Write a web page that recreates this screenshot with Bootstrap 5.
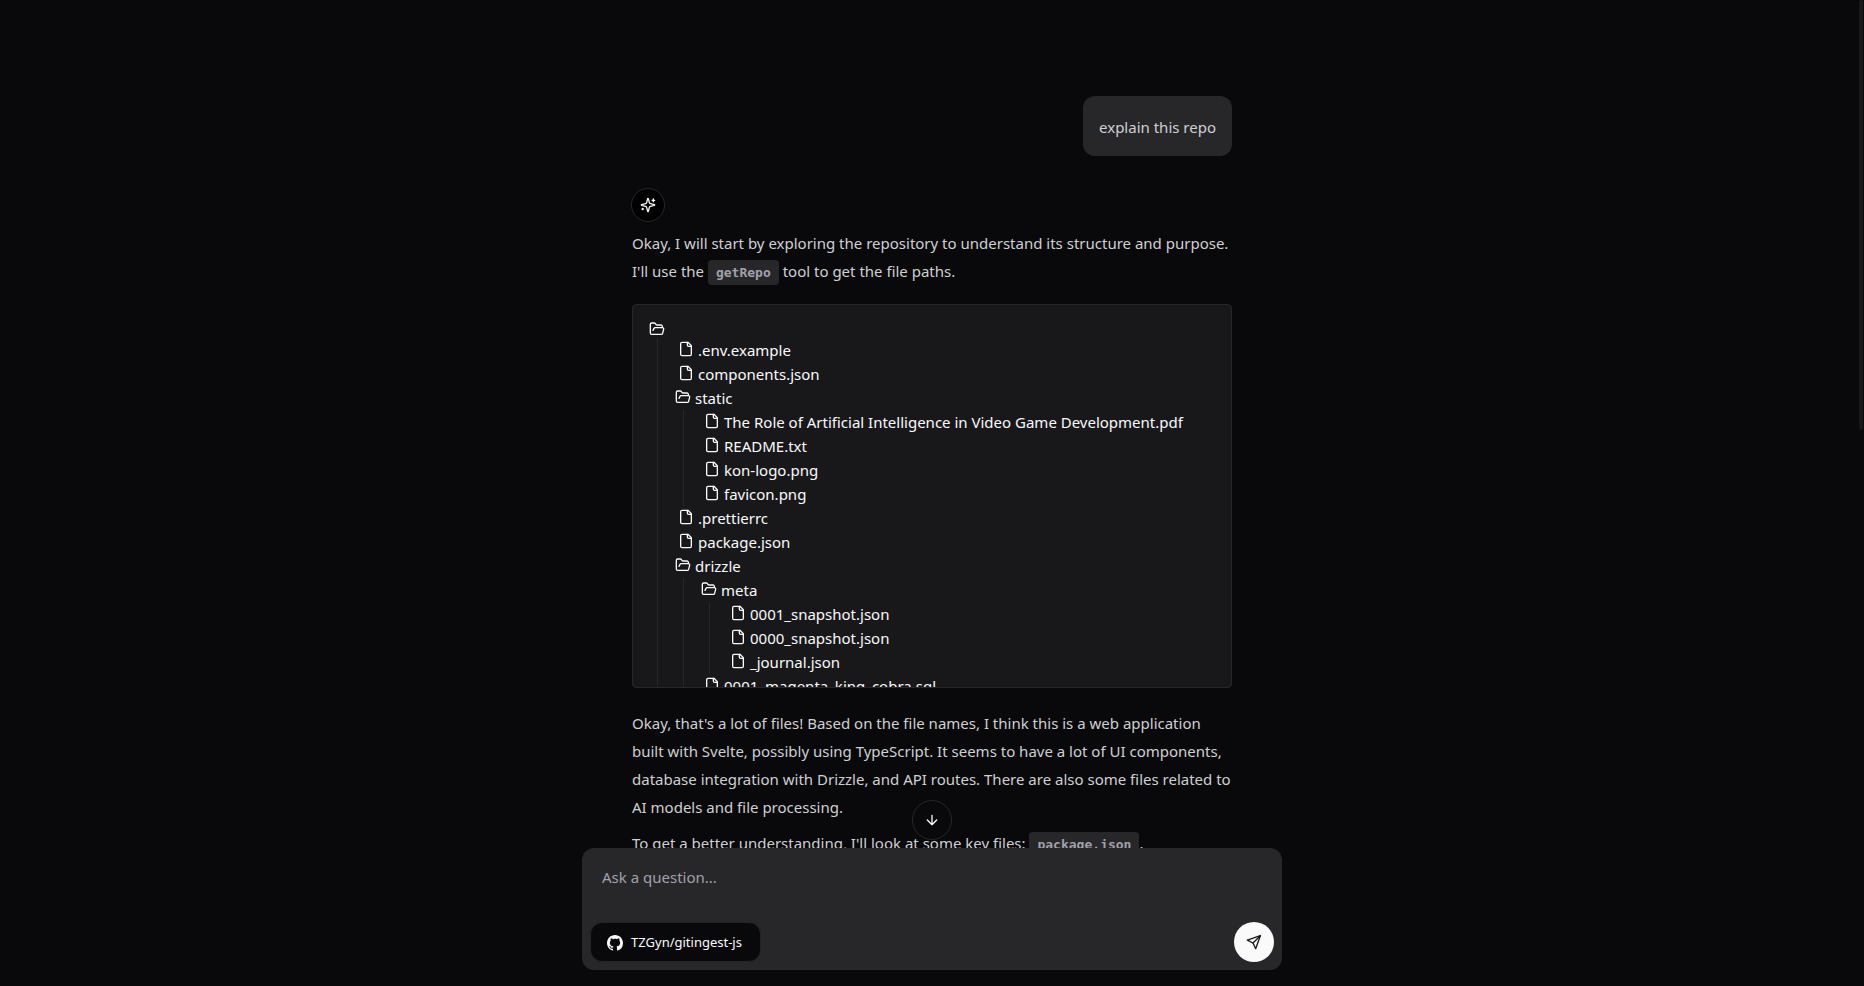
<!DOCTYPE html>
<html lang="en" data-bs-theme="dark">
<head>
<meta charset="utf-8">
<meta name="viewport" content="width=device-width, initial-scale=1">
<title>TZGyn/gitingest-js</title>
<link href="https://cdn.jsdelivr.net/npm/bootstrap@5.3.0/dist/css/bootstrap.min.css" rel="stylesheet">
<style>
  body { background: #09090b; color: #fafafa; font: 15px/24px "Noto Sans", "Open Sans", sans-serif; }
  svg { flex: none; fill: none; stroke: currentColor; stroke-width: 2; stroke-linecap: round; stroke-linejoin: round; }
  .scroll-area { min-height: 0; }
  .thread { max-width: 600px; padding-top: 96px; }
  .prose { line-height: 28px; color: #d0d0d2; }
  .bubble { background: #27272a; border-radius: 12px; padding: 17px 16px 15px; }
  .avatar { width: 34px; height: 34px; margin: 32px 0 7px -1px; background: #000; border: 1px solid #27272a; }
  .prose code { font: bold 13px/17px "DejaVu Sans Mono", monospace; color: #a1a1aa; background: #27272a; border-radius: 4px; padding: 5px 8px; }
  .tree-box { height: 384px; margin: 19px 0 21px; padding: 16px; background: #18181b; border: 1px solid #27272a; border-radius: 4px; }
  .tree-root { height: 17px; }
  .tree-box ul { margin-left: 8px; padding-left: 17px; border-left: 1px solid #27272a; }
  .tree-box ul svg { margin-bottom: 2px; }
  .tree-file { padding-left: 3px; }
  .composer-wrap { max-width: 700px; }
  .composer { background: #27272a; border-radius: 12px; }
  .composer textarea { height: 66px; padding: 9px 12px 7px; resize: none; font-size: 15px; line-height: 24px; }
  .composer textarea::placeholder { color: #a1a1aa; }
  .repo-btn { height: 40px; padding: 2px 18px 0 16px; background: #09090b; border: 1px solid #242427; border-radius: 12px; color: #fafafa; font-size: 13px; }
  .repo-btn svg { fill: currentColor; stroke: none; }
  .round-btn { width: 40px; height: 40px; }
  .send-btn { background: #fafafa; color: #18181b; }
  .down-btn { background: #09090b; border: 1px solid #27272a; color: #fafafa; bottom: 100%; }
  .scroll-thumb { width: 4px; height: 430px; right: 1px; background: #18181b; }
</style>
</head>
<body>
<svg class="d-none">
  <symbol id="file" viewBox="0 0 24 24"><path d="M15 2H6a2 2 0 0 0-2 2v16a2 2 0 0 0 2 2h12a2 2 0 0 0 2-2V7Z"/><path d="M14 2v4a2 2 0 0 0 2 2h4"/></symbol>
  <symbol id="folder" viewBox="0 0 24 24"><path d="m6 14 1.500-2.900A2 2 0 0 1 9.240 10H20a2 2 0 0 1 1.940 2.500l-1.540 6a2 2 0 0 1-1.950 1.500H4a2 2 0 0 1-2-2V5a2 2 0 0 1 2-2h3.900a2 2 0 0 1 1.690.900l.810 1.200a2 2 0 0 0 1.670.900H18a2 2 0 0 1 2 2v2"/></symbol>
</svg>
<div class="vh-100 d-flex flex-column position-relative overflow-hidden">
  <main class="scroll-area flex-fill overflow-hidden">
    <div class="thread mx-auto">
      <div class="d-flex justify-content-end prose"><div class="bubble">explain this repo</div></div>
      <div class="avatar rounded-circle d-flex align-items-center justify-content-center">
        <svg width="16" height="16" viewBox="0 0 24 24"><path d="M9.937 15.500A2 2 0 0 0 8.500 14.063l-6.135-1.582a.5.5 0 0 1 0-.962L8.500 9.936A2 2 0 0 0 9.937 8.500l1.582-6.135a.5.5 0 0 1 .963 0L14.063 8.500A2 2 0 0 0 15.500 9.937l6.135 1.581a.5.5 0 0 1 0 .964L15.500 14.063a2 2 0 0 0-1.437 1.437l-1.582 6.135a.5.5 0 0 1-.963 0z"/><path d="M20 3v4M22 5h-4M4 17v2M5 18H3"/></svg>
      </div>
      <p class="prose mb-0">Okay, I will start by exploring the repository to understand its structure and purpose. I'll use the <code>getRepo</code> tool to get the file paths.</p>
      <div class="tree-box overflow-hidden text-nowrap">
        <div class="tree-root d-flex align-items-start"><svg width="16" height="16"><use href="#folder"/></svg></div>
        <ul class="list-unstyled mb-0">
          <li class="tree-file d-flex align-items-center gap-1"><svg width="16" height="16"><use href="#file"/></svg>.env.example</li>
          <li class="tree-file d-flex align-items-center gap-1"><svg width="16" height="16"><use href="#file"/></svg>components.json</li>
          <li>
            <div class="d-flex align-items-center gap-1"><svg width="16" height="16"><use href="#folder"/></svg>static</div>
            <ul class="list-unstyled mb-0">
              <li class="tree-file d-flex align-items-center gap-1"><svg width="16" height="16"><use href="#file"/></svg>The Role of Artificial Intelligence in Video Game Development.pdf</li>
              <li class="tree-file d-flex align-items-center gap-1"><svg width="16" height="16"><use href="#file"/></svg>README.txt</li>
              <li class="tree-file d-flex align-items-center gap-1"><svg width="16" height="16"><use href="#file"/></svg>kon-logo.png</li>
              <li class="tree-file d-flex align-items-center gap-1"><svg width="16" height="16"><use href="#file"/></svg>favicon.png</li>
            </ul>
          </li>
          <li class="tree-file d-flex align-items-center gap-1"><svg width="16" height="16"><use href="#file"/></svg>.prettierrc</li>
          <li class="tree-file d-flex align-items-center gap-1"><svg width="16" height="16"><use href="#file"/></svg>package.json</li>
          <li>
            <div class="d-flex align-items-center gap-1"><svg width="16" height="16"><use href="#folder"/></svg>drizzle</div>
            <ul class="list-unstyled mb-0">
              <li>
                <div class="d-flex align-items-center gap-1"><svg width="16" height="16"><use href="#folder"/></svg>meta</div>
                <ul class="list-unstyled mb-0">
                  <li class="tree-file d-flex align-items-center gap-1"><svg width="16" height="16"><use href="#file"/></svg>0001_snapshot.json</li>
                  <li class="tree-file d-flex align-items-center gap-1"><svg width="16" height="16"><use href="#file"/></svg>0000_snapshot.json</li>
                  <li class="tree-file d-flex align-items-center gap-1"><svg width="16" height="16"><use href="#file"/></svg>_journal.json</li>
                </ul>
              </li>
              <li class="tree-file d-flex align-items-center gap-1"><svg width="16" height="16"><use href="#file"/></svg>0001_magenta_king_cobra.sql</li>
            </ul>
          </li>
        </ul>
      </div>
      <p class="prose mb-2">Okay, that's a lot of files! Based on the file names, I think this is a web application built with Svelte, possibly using TypeScript. It seems to have a lot of UI components, database integration with Drizzle, and API routes. There are also some files related to AI models and file processing.</p>
      <p class="prose mb-0">To get a better understanding, I'll look at some key files: <code>package.json</code>.</p>
    </div>
  </main>
  <footer class="composer-wrap w-100 mx-auto pb-3 position-relative">
    <button type="button" class="btn round-btn down-btn rounded-circle p-0 mb-2 position-absolute start-50 translate-middle-x d-flex align-items-center justify-content-center" aria-label="Scroll to bottom">
      <svg width="16" height="16" viewBox="0 0 24 24"><path d="M12 5v14M19 12l-7 7-7-7"/></svg>
    </button>
    <form class="composer p-2">
      <textarea class="form-control bg-transparent border-0 shadow-none d-block" placeholder="Ask a question..." aria-label="Ask a question"></textarea>
      <div class="d-flex justify-content-between align-items-center">
        <button type="button" class="btn repo-btn d-flex align-items-center gap-2">
          <svg width="16" height="16" viewBox="0 0 16 16"><path d="M8 0C3.580 0 0 3.580 0 8c0 3.540 2.290 6.530 5.470 7.590.4.070.55-.17.55-.38 0-.19-.01-.82-.01-1.490-2.010.37-2.530-.49-2.690-.94-.09-.23-.48-.94-.82-1.130-.28-.15-.68-.52-.01-.53.63-.01 1.080.58 1.230.82.72 1.210 1.870.87 2.330.66.07-.52.28-.87.51-1.070-1.780-.2-3.640-.89-3.640-3.950 0-.87.31-1.590.82-2.150-.08-.2-.36-1.020.08-2.120 0 0 .67-.21 2.200.82.64-.18 1.320-.27 2-.27s1.360.09 2 .27c1.530-1.040 2.200-.82 2.200-.82.44 1.100.16 1.920.08 2.120.51.56.82 1.270.82 2.150 0 3.070-1.870 3.750-3.650 3.950.29.25.54.73.54 1.480 0 1.070-.01 1.930-.01 2.200 0 .21.15.46.55.38A8.010 8.010 0 0 0 16 8c0-4.420-3.580-8-8-8"/></svg>
          TZGyn/gitingest-js
        </button>
        <button type="submit" class="btn round-btn send-btn rounded-circle p-0 d-flex align-items-center justify-content-center" aria-label="Send">
          <svg width="16" height="16" viewBox="0 0 24 24"><path d="M21.500 2.500 2 9.300l8.500 4.200L14.500 22z"/><path d="M21.500 2.500 10.500 13.500"/></svg>
        </button>
      </div>
    </form>
  </footer>
  <div class="scroll-thumb rounded-pill position-absolute top-0"></div>
</div>
<script src="https://cdn.jsdelivr.net/npm/bootstrap@5.3.0/dist/js/bootstrap.bundle.min.js"></script>
</body>
</html>
